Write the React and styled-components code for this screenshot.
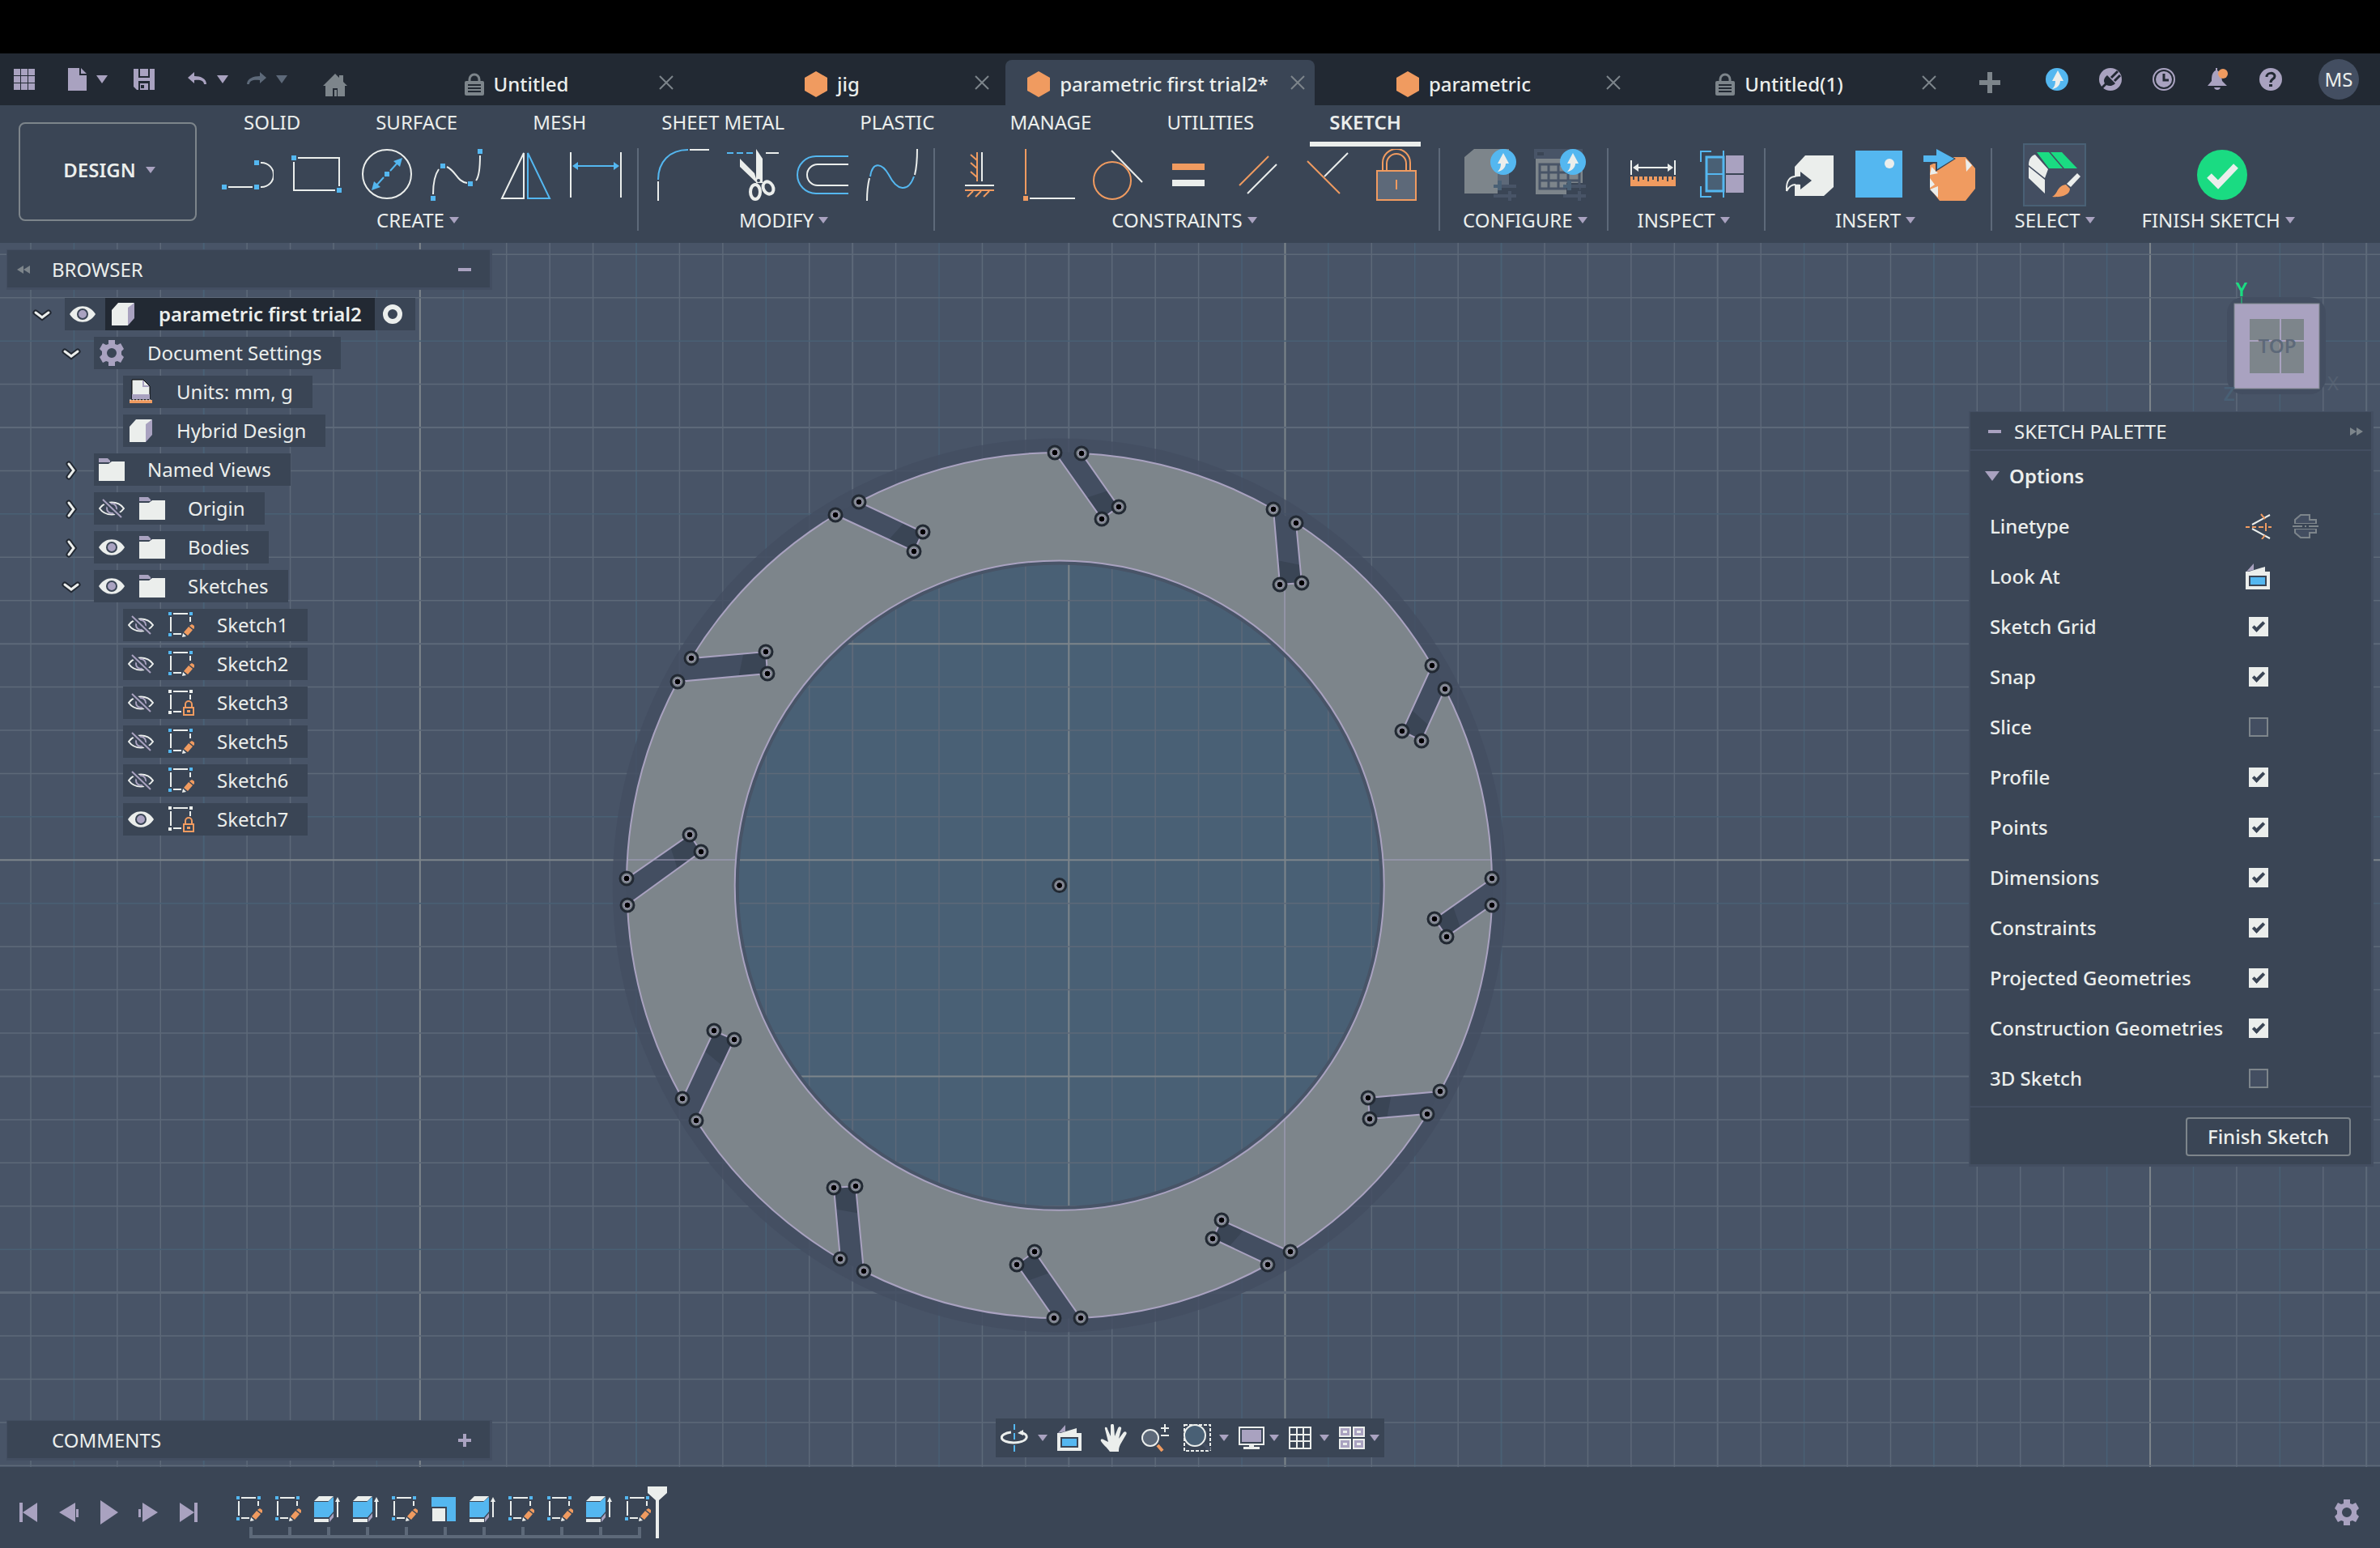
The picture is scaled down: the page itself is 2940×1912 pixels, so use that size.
import React, { useState } from 'react';
import styled, { createGlobalStyle, css } from 'styled-components';

const c = {
  black: '#000000',
  dark: '#222933',
  panel: '#3a4555',
  edge: '#434e61',
  canvas: '#485467',
  line: '#5d6979',
  deep: '#496075',
  grey: '#7d858b',
  text: '#ebeeec',
  lilac: '#a9a2c0',
  blue: '#54b7f0',
  orange: '#f09b60',
  green: '#1adb82',
};

const GlobalStyle = createGlobalStyle`
  *, *::before, *::after { box-sizing: border-box; }
  body {
    margin: 0;
    background: ${c.canvas};
    color: ${c.text};
    font-family: "Noto Sans", sans-serif;
    font-size: 24px;
    line-height: 32px;
  }
  button {
    margin: 0;
    padding: 0;
    border: 0;
    background: none;
    color: inherit;
    font: inherit;
    cursor: pointer;
  }
  svg { display: block; flex: none; }
  ul { margin: 0; padding: 0; list-style: none; }
`;

/* ---------- layout ---------- */

const Page = styled.div`
  display: flex;
  flex-direction: column;
  min-height: 100vh;
`;

const Notch = styled.div`
  height: 66px;
  background: ${c.black};
`;

const TitleBar = styled.header`
  display: flex;
  align-items: center;
  height: 64px;
  padding: 0 26px 0 17px;
  background: ${c.dark};
`;

const QuickTools = styled.div`
  display: flex;
  align-items: center;
  gap: 32px;
`;

const History = styled.div`
  display: flex;
  gap: 23px;
`;

const QuickButton = styled.button`
  display: flex;
  align-items: center;
  gap: 12px;
  min-width: ${p => p.$wide ? '35px' : '0'};
`;

const TabStrip = styled.nav`
  display: flex;
  align-self: flex-end;
  align-items: center;
  gap: 8px;
  height: 56px;
`;

const HomeButton = styled.button`
  padding: 6px 0 0;
  margin: 0 25px 0 44px;
`;

const Tab = styled.div`
  display: flex;
  align-items: center;
  flex: 0 1 382px;
  width: 382px;
  height: 56px;
  border-radius: 8px 8px 0 0;
  background: ${p => p.$active ? c.panel : 'transparent'};
`;

const TabTitle = styled.button`
  display: flex;
  flex: 1;
  align-items: center;
  justify-content: center;
  gap: 12px;
  padding: 4px 0 0 12px;
  font-weight: 500;
  white-space: nowrap;
`;

const TabClose = styled.button`
  display: grid;
  place-items: center;
  width: 42px;
  height: 42px;
`;

const AddTab = styled.button`
  margin-left: 33px;
`;

const Account = styled.div`
  display: flex;
  align-items: center;
  gap: 38px;
  margin-left: auto;
`;

const Avatar = styled.button`
  width: 50px;
  height: 50px;
  margin-left: 7px;
  border-radius: 50%;
  background: ${c.edge};
`;

const Ribbon = styled.section`
  display: flex;
  height: 170px;
  background: ${c.panel};
`;

const WorkspaceButton = styled.button`
  display: flex;
  align-items: center;
  justify-content: center;
  gap: 12px;
  width: 220px;
  height: 122px;
  margin: 21px 7px 0 23px;
  padding: 0 0 4px 4px;
  border: 2px solid ${c.grey};
  border-radius: 8px;
  font-weight: 600;
`;

const RibbonMain = styled.div`
  flex: 1;
`;

const RibbonTabs = styled.nav`
  display: flex;
  gap: 45px;
  height: 51px;
  margin-left: 27px;
`;

const RibbonTab = styled.button`
  height: 51px;
  padding: 0 24px 3px;
  border-bottom: 6px solid ${p => p.$active ? c.text : 'transparent'};
  font-weight: ${p => p.$active ? 600 : 400};
`;

const Groups = styled.div`
  display: flex;
  margin-top: 2px;
`;

const Group = styled.div`
  display: flex;
  flex-direction: column;
  align-items: center;
  gap: 10px;
  height: 102px;
  padding: 1px 19px 0 ${p => p.$last ? '32px' : '23px'};
  border-right: 2px solid ${p => p.$open ? 'transparent' : c.line};

  &:first-child { padding-left: 24px; }
`;

const GroupIcons = styled.div`
  display: flex;
  gap: 22px;
`;

const ToolButton = styled.button`
  ${p => p.$pressed && css`
    margin: -7px;
    padding: 5px;
    border: 2px solid ${c.deep};
    background: ${c.edge};
  `}
`;

const GroupLabel = styled.button`
  display: flex;
  align-items: center;
  gap: 6px;
  padding: ${p => p.$centered ? '0 5px' : '0 10px 0 0'};
  line-height: 28px;
  white-space: nowrap;
`;

const Workspace = styled.main`
  position: relative;
  display: grid;
  flex: 1;
  grid-template-columns: 1fr auto 1fr;
  padding: 8px;
`;

const Canvas = styled.svg`
  position: absolute;
  inset: 0;
  width: 100%;
  height: 100%;
`;

const LeftColumn = styled.div`
  position: relative;
  display: flex;
  flex-direction: column;
  justify-content: space-between;
  align-items: flex-start;
`;

const RightColumn = styled.div`
  position: relative;
  display: flex;
  flex-direction: column;
  align-items: flex-end;
`;

const PanelHeader = styled.div`
  display: flex;
  align-items: center;
  width: 600px;
  height: 50px;
  padding: 2px 23px 0 12px;
  border: solid ${c.edge};
  border-width: 1px 3px 3px 1px;
  background: ${c.panel};
`;

const PanelTitle = styled.h2`
  flex: 1;
  margin: 0;
  padding-left: ${p => p.$indent};
  font-size: 24px;
  font-weight: 400;
`;

/* ---------- browser tree ---------- */

const Tree = styled.ul`
  display: grid;
  gap: 8px;
  margin-top: 10px;
`;

const TreeRow = styled.li`
  display: flex;
  align-items: center;
  height: 40px;
  padding-left: ${p => 30 + p.$level * 36}px;
`;

const Toggle = styled.button`
  width: 42px;
  height: 40px;
  padding-top: 1px;
`;

const Node = styled.div`
  display: flex;
  height: 40px;
  background: ${c.panel};
`;

const EyeSlot = styled.button`
  display: grid;
  place-items: center;
  width: 50px;
  padding-right: 6px;
`;

const NodeBody = styled.div`
  display: flex;
  align-items: center;
  padding: 0 ${p => p.$root ? '16px' : '24px'} 0 6px;
  background: ${p => p.$root ? c.dark : 'transparent'};
  font-weight: ${p => p.$root ? 600 : 400};
  white-space: nowrap;
`;

const NodeIcon = styled.span`
  width: 60px;
`;

const RootRadio = styled.button`
  display: flex;
  align-items: center;
  width: 50px;
  padding-left: 10px;
`;

/* ---------- sketch palette ---------- */

const Palette = styled.aside`
  width: 500px;
  margin-top: 3px;
  border: solid ${c.edge};
  border-width: 1px 3px 3px 2px;
  background: ${c.panel};
`;

const PaletteHeader = styled.div`
  display: flex;
  align-items: center;
  height: 48px;
  padding: 2px 10px 0 22px;
  border-bottom: 2px solid ${c.edge};
`;

const OptionsTitle = styled.button`
  display: flex;
  align-items: center;
  gap: 12px;
  height: 62px;
  padding-left: 18px;
  font-weight: 600;
`;

const OptionRow = styled.div`
  display: grid;
  grid-template-columns: 1fr 151px;
  align-items: center;
  height: 62px;
  padding-left: 24px;
  font-weight: 500;
`;

const OptionIcons = styled.div`
  display: flex;
  gap: 26px;
  margin-left: -4px;
`;

const Check = styled.input`
  display: grid;
  place-content: center;
  appearance: none;
  width: 24px;
  height: 24px;
  margin: 0;
  border: 2px solid ${c.grey};
  background: ${c.edge};

  &:checked {
    border-color: ${c.text};
    background: ${c.text};
  }

  &:checked::after {
    content: "";
    width: 8px;
    height: 15px;
    border: solid ${c.panel};
    border-width: 0 4px 4px 0;
    transform: translateY(-2px) rotate(45deg);
  }
`;

const PaletteFooter = styled.div`
  display: flex;
  justify-content: flex-end;
  height: 72px;
  margin-top: 3px;
  padding: 12px 25px 0 0;
  border-top: 2px solid ${c.edge};
`;

const FinishButton = styled.button`
  width: 204px;
  height: 48px;
  border: 2px solid ${c.grey};
  border-radius: 4px;
  font-weight: 500;
`;

/* ---------- navigation bar ---------- */

const NavBar = styled.div`
  position: relative;
  display: flex;
  align-self: end;
  gap: 12px;
  height: 48px;
  margin-bottom: 4px;
  padding: 0 6px;
  background: ${c.panel};
`;

const NavButton = styled.button`
  display: flex;
  align-items: center;
  justify-content: space-between;
  width: ${p => p.$width}px;
  padding-bottom: 1px;
`;

/* ---------- timeline ---------- */

const Footer = styled.footer`
  display: flex;
  height: 100px;
  padding-right: 25px;
  background: ${c.panel};
`;

const Playback = styled.div`
  display: flex;
  align-items: center;
  gap: 23px;
  height: 32px;
  margin: 40px 48px 0 22px;
`;

const Timeline = styled.ul`
  display: flex;
  margin-top: 36px;
`;

const Feature = styled.li`
  width: 48px;

  &::after {
    content: "";
    display: block;
    width: 48px;
    height: 14px;
    margin: 6px 0 0 16px;
    border: solid ${c.line};
    border-width: 0 0 4px 4px;
  }

  &:last-child::after { width: 4px; }
`;

const Marker = styled.svg`
  margin: 24px 0 0 -20px;
`;

const Preferences = styled.button`
  height: 32px;
  margin: 40px 0 0 auto;
`;

/* ---------- icons ---------- */

const Icon = ({ w = 32, h, children }) => (
  <svg width={w} height={h || w} viewBox={`0 0 ${w} ${h || w}`} fill="none" strokeWidth="2" aria-hidden="true">
    {children}
  </svg>
);

const Caret = ({ w = 12, h = 8, fill = c.lilac }) => (
  <Icon w={w} h={h}><path d={`M0 0H${w}L${w / 2} ${h}Z`} fill={fill} /></Icon>
);

const Dots = ({ at, size = 6, fill = c.blue }) => (
  <g fill={fill}>
    {at.map(([x, y]) => <rect key={`${x}-${y}`} x={x - size / 2} y={y - size / 2} width={size} height={size} />)}
  </g>
);

const AppsIcon = () => (
  <Icon w={26}>
    {[0, 9, 18].map(y => [0, 9, 18].map(x => <rect key={x + '-' + y} x={x} y={y} width="8" height="8" fill={c.lilac} />))}
  </Icon>
);

const FileIcon = () => (
  <Icon w={23} h={28}><path d="M0 0H14V9H23V28H0Z M16 0L23 7H16Z" fill={c.lilac} /></Icon>
);

const SaveIcon = () => (
  <Icon w={26}>
    <path d="M0 0H6V11H20V0H26V26H4L0 22Z M8 0H18V9H8Z" fill={c.lilac} />
    <path d="M6 16H20M7 26V17H19V26" stroke={c.dark} />
    <rect x="9" y="20" width="4" height="4" fill={c.dark} />
  </Icon>
);

const UndoIcon = () => (
  <Icon w={24} h={18}>
    <path d="M0 7L8 0V5C16 5 23 8 23 15H20C20 10 14 9 8 10V14Z" fill={c.lilac} />
  </Icon>
);

const RedoIcon = () => (
  <Icon w={24} h={18}>
    <path d="M24 7L16 0V5C8 5 0 8 0 15H3C3 10 9 9 16 10V14Z" fill={c.line} />
  </Icon>
);

const HomeIcon = () => (
  <Icon w={30} h={28}>
    <path d="M0 15L15 0L20 5V2H25V10L30 15H27V28H18V18H12V28H3V15Z" fill={c.grey} />
    <rect x="14" y="20" width="3" height="8" fill={c.grey} />
  </Icon>
);

const TabLock = () => (
  <Icon w={24} h={28}>
    <path d="M6 11V8a6 6 0 0 1 12 0v3" stroke={c.grey} strokeWidth="3" />
    <rect y="10" width="24" height="18" rx="2" fill={c.grey} />
    <path d="M4 15H20M4 19H20M4 23H20" stroke={c.dark} />
  </Icon>
);

const Hexagon = () => (
  <Icon w={28} h={32}><path d="M14 0L28 8V24L14 32L0 24V8Z" fill={c.orange} /></Icon>
);

const CloseIcon = () => (
  <Icon w={18}><path d="M1 1L17 17M17 1L1 17" stroke={c.grey} /></Icon>
);

const PlusIcon = ({ w = 26, t = 6, fill = c.grey }) => (
  <Icon w={w}><path d={`M${w / 2} 0V${w}M0 ${w / 2}H${w}`} stroke={fill} strokeWidth={t} /></Icon>
);

const MinusIcon = () => <Icon w={16} h={4}><rect width="16" height="4" fill={c.lilac} /></Icon>;

const UpArrow = ({ x = 14, y = 14 }) => (
  <path
    transform={`translate(${x} ${y})`}
    d="M1 -11L8 2H4C4 7 0 11 -6 12C-3 9 -2 6 -2 2H-6Z"
    fill={c.text}
  />
);

const UpdateIcon = () => (
  <Icon w={28}><circle cx="14" cy="14" r="14" fill={c.blue} /><UpArrow /></Icon>
);

const PlugIcon = () => (
  <Icon w={28}>
    <circle cx="14" cy="14" r="14" fill={c.lilac} />
    <path d="M3 25L10 18M15 12L23 4M19 16L26 9" stroke={c.dark} strokeWidth="3" />
    <path d="M10 9L20 19C15 24 9 22 7 19C5 16 6 12 10 9Z" fill={c.dark} />
  </Icon>
);

const ClockIcon = () => (
  <Icon w={28}>
    <circle cx="14" cy="14" r="13" stroke={c.lilac} />
    <circle cx="14" cy="14" r="10" fill={c.lilac} />
    <path d="M14 7V15H20" stroke={c.dark} strokeWidth="3" />
  </Icon>
);

const BellIcon = () => (
  <Icon w={28}>
    <path d="M12 0H14V3C19 5 19 10 20 16L26 22H2L7 16C7 9 8 5 12 3Z" fill={c.lilac} />
    <path d="M10 24H18C17 28 11 28 10 24Z" fill={c.lilac} />
    <circle cx="21" cy="7" r="6" fill={c.orange} />
  </Icon>
);

const HelpIcon = () => (
  <Icon w={28}>
    <circle cx="14" cy="14" r="14" fill={c.lilac} />
    <path d="M9 11C9 5 19 5 19 10C19 14 14 13 14 18" stroke={c.dark} strokeWidth="3" />
    <rect x="12" y="20" width="4" height="3" fill={c.dark} />
  </Icon>
);

// ribbon tools, all on a 64px square

const LineTool = () => (
  <Icon w={64}>
    <path d="M8 47H38M48 17H49A15 15 0 0 1 49 47H48" stroke={c.text} />
    <Dots at={[[3, 47], [43, 17], [43, 47]]} />
  </Icon>
);

const RectTool = () => (
  <Icon w={64}>
    <path d="M8 11H59V46M54 51H3V16" stroke={c.text} />
    <Dots at={[[3, 11], [59, 51]]} />
  </Icon>
);

const CircleTool = () => (
  <Icon w={64}>
    <circle cx="32" cy="31" r="30" stroke={c.text} />
    <path d="M36 27L46 16M28 35L18 46" stroke={c.blue} />
    <path d="M51 11L48 22L40 15ZM13 51L16 40L24 47Z" fill={c.blue} />
    <Dots at={[[32, 31]]} />
  </Icon>
);

const SplineTool = () => (
  <Icon w={64}>
    <path d="M3 56C3 45 5 32 10 25M20 22C32 28 32 40 45 42M56 39C60 34 61 20 61 8" stroke={c.text} />
    <Dots at={[[3, 61], [15, 21], [49, 43], [61, 3]]} />
  </Icon>
);

const MirrorTool = () => (
  <Icon w={64}>
    <path d="M29 5V61H2Z" stroke={c.text} />
    <path d="M34 5V61H61Z" stroke={c.blue} />
  </Icon>
);

const DimensionTool = () => (
  <Icon w={64}>
    <path d="M1 4V60M63 4V60" stroke={c.text} />
    <path d="M8 21H56" stroke={c.blue} />
    <path d="M3 21L10 16V26ZM61 21L54 16V26Z" fill={c.blue} />
  </Icon>
);

const FilletTool = () => (
  <Icon w={64}>
    <path d="M1 64V40M40 1H64" stroke={c.text} />
    <path d="M1 38C1 16 15 1 38 1" stroke={c.blue} />
  </Icon>
);

const TrimTool = () => (
  <Icon w={64}>
    <path d="M0 5H34" stroke={c.blue} strokeDasharray="8 4" />
    <path d="M48 5H64" stroke={c.text} />
    <path d="M36 0L44 12V42H36ZM16 12L34 30L38 43L16 22Z" fill={c.text} />
    <ellipse cx="35" cy="53" rx="6" ry="9" stroke={c.text} strokeWidth="4" />
    <ellipse cx="51" cy="48" rx="6" ry="8" transform="rotate(-28 51 48)" stroke={c.text} strokeWidth="4" />
    <circle cx="39" cy="39" r="2" fill={c.panel} />
  </Icon>
);

const OffsetTool = () => (
  <Icon w={64}>
    <path d="M64 9H24A23 23 0 0 0 24 55H64" stroke={c.blue} />
    <path d="M64 19H26A13 13 0 0 0 26 45H64" stroke={c.text} />
  </Icon>
);

const CurvatureTool = () => (
  <Icon w={64}>
    <path d="M1 64C1 52 2 44 4 36M60 32C62 24 63 12 63 0" stroke={c.text} />
    <path d="M5 34C8 14 20 18 28 32C38 52 52 54 59 34" stroke={c.blue} />
  </Icon>
);

const HorizontalTool = () => (
  <Icon w={64}>
    <path d="M35 4V40M14 45H50" stroke={c.text} />
    <path d="M29 4V40M29 14L21 7M29 24L21 17M29 35L21 28M14 51H50M24 52L17 59M34 52L27 59M44 52L37 59" stroke={c.orange} />
  </Icon>
);

const CoincidentTool = () => (
  <Icon w={64}>
    <path d="M3 0V56" stroke={c.orange} />
    <path d="M8 61H64" stroke={c.text} />
    <Dots at={[[3, 61]]} fill={c.orange} />
  </Icon>
);

const TangentTool = () => (
  <Icon w={64}>
    <circle cx="24" cy="39" r="23" stroke={c.orange} />
    <path d="M23 2L61 41" stroke={c.text} />
  </Icon>
);

const EqualTool = () => (
  <Icon w={64}>
    <rect x="12" y="18" width="40" height="8" fill={c.orange} />
    <rect x="12" y="38" width="40" height="8" fill={c.text} />
  </Icon>
);

const ParallelTool = () => (
  <Icon w={64}>
    <path d="M9 45L45 9" stroke={c.orange} />
    <path d="M19 55L55 19" stroke={c.text} />
  </Icon>
);

const PerpendicularTool = () => (
  <Icon w={64}>
    <path d="M7 15L47 55" stroke={c.orange} />
    <path d="M57 5L28 34" stroke={c.text} />
  </Icon>
);

const FixTool = () => (
  <Icon w={64}>
    <path d="M14 26V17A17 17 0 0 1 48 17V26M19 26V18A12 12 0 0 1 43 18V26" stroke={c.orange} />
    <rect x="7" y="27" width="48" height="36" fill={c.line} stroke={c.orange} />
    <path d="M31 38V50" stroke={c.orange} />
  </Icon>
);

const FaintPlus = () => (
  <>
    <path d="M46 46H64M36 58H64M56 52V64" stroke={c.canvas} strokeWidth="4" />
    <path d="M36 44H41V39H46V51H41V48H36Z" fill={c.deep} />
  </>
);

const ConfigureTool = () => (
  <Icon w={64}>
    <path d="M0 10L12 0H55V43H41V55H0Z" fill={c.grey} />
    <path d="M41 14H55V44H41Z" fill={c.line} />
    <FaintPlus />
    <circle cx="48" cy="16" r="16" fill={c.blue} />
    <UpArrow x={47} y={16} />
  </Icon>
);

const ConfigTableTool = () => (
  <Icon w={64}>
    <path d="M0 0H60V12H0Z" fill={c.canvas} />
    <rect x="4" y="4" width="8" height="4" fill={c.panel} />
    <path d="M2 12H60V42H40V56H2Z" fill={c.grey} />
    <path d="M7 19H56V49H7ZM7 29H56M7 39H56M18 19V49M30 19V49M42 19V49" stroke={c.canvas} strokeWidth="3" />
    <path d="M40 44H56V56H40Z" fill={c.panel} />
    <FaintPlus />
    <circle cx="48" cy="16" r="16" fill={c.blue} />
    <UpArrow x={47} y={16} />
  </Icon>
);

const MeasureTool = () => (
  <Icon w={64}>
    <path d="M5 14V32M59 14V32M12 23H52" stroke={c.text} />
    <path d="M7 23L14 18V28ZM57 23L50 18V28Z" fill={c.text} />
    <rect x="4" y="34" width="56" height="12" fill={c.orange} />
    <path d="M8 34V38M14 34V40M20 34V38M26 34V40M32 34V38M38 34V40M44 34V38M50 34V40M56 34V38" stroke={c.panel} />
  </Icon>
);

const AnalysisTool = () => (
  <Icon w={64}>
    <rect x="12" y="10" width="21" height="42" fill={c.deep} stroke={c.blue} strokeWidth="3" />
    <path d="M18 3H5V16M18 59H5V46M33 2V60M12 31H33" stroke={c.blue} />
    <path d="M36 8H58V30H36ZM36 32H58V54H36Z" fill={c.lilac} />
  </Icon>
);

const InsertTool = () => (
  <Icon w={64}>
    <path d="M26 8H61V47L49 58H13V22Z" fill={c.text} />
    <path d="M3 52C2 38 8 34 20 34V28L34 39L20 50V44C12 43 7 45 3 52Z" fill={c.panel} />
    <path d="M3 52C2 38 8 34 14 34M3 52C6 46 9 44 14 44" stroke={c.text} />
  </Icon>
);

const DecalTool = () => (
  <Icon w={64}>
    <rect x="2" y="2" width="58" height="58" fill={c.blue} />
    <circle cx="44" cy="18" r="6" fill={c.text} />
  </Icon>
);

const MeshTool = () => (
  <Icon w={64}>
    <path d="M30 10H52L64 24V49L52 64H20L8 49V20Z" fill={c.orange} />
    <path d="M52 12L60 20L53 28ZM10 22L18 30L8 32ZM8 36L14 44L8 48ZM8 50L18 46V60Z" fill={c.text} />
    <path d="M0 7H15V-2L40 12L15 28V18H0Z" fill={c.panel} />
    <path d="M0 8H16V0L38 12L17 25V16H0Z" fill={c.blue} />
  </Icon>
);

const SelectTool = () => (
  <Icon w={64}>
    <path d="M10 4H25L42 24H25ZM27 4H41L60 24H44Z" fill={c.green} />
    <path d="M8 7L24 25L20 36L0 20C0 13 3 8 8 7ZM0 22L20 38V55L0 36Z" fill={c.text} />
    <path d="M60 30L64 34L52 47L47 43Z" fill={c.text} />
    <path d="M46 44L51 49C51 57 40 60 29 59C36 56 35 45 46 44Z" fill={c.orange} />
  </Icon>
);

const FinishTool = () => (
  <Icon w={64}>
    <circle cx="32" cy="32" r="31" fill={c.green} />
    <path d="M16 33L27 44L49 21" stroke={c.text} strokeWidth="8" />
  </Icon>
);

// browser tree

const Chevron = ({ open }) => (
  <Icon w={28}>
    {[c.dark, c.text].map((stroke, i) => (
      <path key={stroke} d={open ? 'M6 11L14 17L22 11' : 'M11 6L17 14L11 22'} stroke={stroke} strokeWidth={i ? 3 : 7} strokeLinecap="round" />
    ))}
  </Icon>
);

const EyeIcon = ({ off }) => off ? (
  <Icon w={32} h={24}>
    <path d="M1 12C8 2 24 2 31 12C24 22 8 22 1 12Z" stroke={c.text} />
    <path d="M10 12A6 6 0 0 1 22 12A6 6 0 0 1 10 12Z" stroke={c.lilac} />
    <path d="M5 1L28 23" stroke={c.panel} strokeWidth="6" />
    <path d="M5 1L28 23" stroke={c.lilac} />
  </Icon>
) : (
  <Icon w={32} h={24}>
    <path d="M0 12C8 -1 24 -1 32 12C24 25 8 25 0 12Z" fill={c.text} />
    <circle cx="16" cy="12" r="6" fill={c.lilac} stroke={c.panel} />
  </Icon>
);

const CubeIcon = () => (
  <Icon w={32} h={28}>
    <path d="M2 9L10 0H30L22 9V28H2Z" fill={c.text} />
    <path d="M22 6L30 0V19L22 28Z" fill={c.lilac} />
  </Icon>
);

const GearIcon = () => (
  <Icon w={32}>
    <path fillRule="evenodd" d="M12 0H20V5L23 6L27 4L31 11L28 14V18L31 21L27 28L23 26L20 27V32H12V27L9 26L5 28L1 21L4 18V14L1 11L5 4L9 6L12 5ZM16 10A6 6 0 1 0 16 22A6 6 0 1 0 16 10Z" fill={c.lilac} />
  </Icon>
);

const UnitsIcon = () => (
  <Icon w={32}>
    <path d="M5 1H19L27 9V25H5Z" fill={c.text} stroke="#000" strokeWidth="1" />
    <path d="M5 19H27V25H5Z" fill={c.lilac} />
    <path d="M19 2V9H26" stroke={c.lilac} />
    <path d="M2 26H30V30H2Z" fill={c.orange} />
    <path d="M2 26H30" stroke={c.text} strokeWidth="1" strokeDasharray="2 2" />
  </Icon>
);

const FolderIcon = () => (
  <Icon w={32} h={28}>
    <path d="M0 0H11L14 3V5H0Z" fill={c.lilac} />
    <path d="M0 7H12L16 4H32V28H0Z" fill={c.text} />
  </Icon>
);

const SketchIcon = ({ locked }) => (
  <Icon w={32}>
    <path d="M6 2H24M3 6V24M6 27H16M27 6V12" stroke={c.text} />
    <Dots at={[[2, 2], [28, 2], [2, 28]]} size={4} fill={locked ? c.text : c.blue} />
    {locked ? (
      <>
        <rect x="19" y="22" width="12" height="9" stroke={c.orange} />
        <path d="M21 21V18A4 4 0 0 1 29 18V21" stroke={c.orange} />
        <rect x="23" y="25" width="4" height="3" fill={c.orange} />
      </>
    ) : (
      <>
        <path d="M17 31L18 26L22 30Z" fill={c.text} />
        <path d="M19 25L25 18L30 22L24 29Z" fill={c.orange} />
        <path d="M26 17L29 15L32 17V20L31 21Z" fill={c.orange} />
      </>
    )}
  </Icon>
);

const CollapseArrows = ({ right }) => (
  <Icon w={16} h={12}>
    <path d={right ? 'M0 1L8 6L0 11ZM8 1L16 6L8 11Z' : 'M16 1L8 6L16 11ZM8 1L0 6L8 11Z'} fill={c.grey} />
  </Icon>
);

const LookAtIcon = ({ w = 30 }) => (
  <Icon w={w} h={32}>
    <path d="M1 10L10 0V8Z" fill={c.lilac} />
    <path d={`M4 10L${w - 6} 4V10H${w}V32H0V10Z`} fill={c.text} />
    <rect x="5" y="16" width={w - 10} height="11" fill={c.blue} stroke={c.panel} />
  </Icon>
);

const ConstructionIcon = () => (
  <Icon w={32}>
    <path d="M8 14L30 2M8 19L30 31" stroke={c.text} />
    <path d="M0 17H5M8 17H13M16 17H22M28 17H32M25 12V22M19 1L24 7M20 32L24 27" stroke={c.orange} />
  </Icon>
);

const CenterlineIcon = () => (
  <Icon w={32}>
    <path d="M3 13V8L10 2H21V8H29V13ZM3 19V24L10 30H21V24H29V19Z" fill={c.edge} stroke={c.grey} />
    <path d="M0 16H32" stroke={c.panel} strokeWidth="6" />
    <path d="M0 16H12M15 16H17M20 16H32" stroke={c.grey} />
  </Icon>
);

// navigation bar

const OrbitIcon = () => (
  <Icon w={34}>
    <path d="M13 10C-3 12 -3 22 16 23C36 22 36 12 24 10" stroke={c.text} strokeWidth="3" />
    <path d="M21 11L28 7V14Z" fill={c.text} />
    <path d="M17 0V7M17 11V19M17 26V34" stroke={c.blue} />
  </Icon>
);

const HandIcon = () => (
  <Icon w={34}>
    <path d="M13 34C9 28 5 26 2 21C1 19 3 18 5 19L11 22L7 6C6 3 10 3 10 6L14 15V2C14 -1 18 -1 18 2L19 15L23 5C24 2 28 3 27 6L24 18L30 10C32 8 35 10 33 13L26 25C24 29 24 31 24 34Z" fill={c.text} />
  </Icon>
);

const ZoomIcon = () => (
  <Icon w={34}>
    <circle cx="11" cy="17" r="10" fill={c.line} stroke={c.text} />
    <path d="M20 26L26 33" stroke={c.orange} strokeWidth="4" />
    <path d="M29 0V10M24 5H34M24 14H34" stroke={c.text} />
  </Icon>
);

const FitIcon = () => (
  <Icon w={34}>
    <rect x="1" y="1" width="32" height="32" stroke={c.text} strokeDasharray="4 2" />
    <circle cx="14" cy="14" r="13" fill={c.deep} stroke={c.text} />
    <path d="M24 24L33 32" stroke={c.edge} strokeWidth="4" />
  </Icon>
);

const DisplayIcon = () => (
  <Icon w={32} h={28}>
    <rect x="1" y="1" width="30" height="21" stroke={c.text} />
    <rect x="4" y="4" width="24" height="15" fill={c.lilac} />
    <path d="M13 22H19V25H26V28H6V25H13Z" fill={c.text} />
  </Icon>
);

const GridIcon = () => (
  <Icon w={28}>
    <path d="M1 1H27V27H1ZM10 1V27M18 1V27M1 10H27M1 18H27" stroke={c.text} />
  </Icon>
);

const ViewportsIcon = () => (
  <Icon w={32} h={28}>
    {[[1, 1], [18, 1], [1, 16], [18, 16]].map(([x, y]) => (
      <g key={`${x}-${y}`}>
        <rect x={x} y={y} width="13" height="11" fill={c.lilac} stroke={c.text} />
        <rect x={x + 4} y={y + 4} width="5" height="3" fill={c.text} />
      </g>
    ))}
  </Icon>
);

// timeline

const ExtrudeIcon = () => (
  <Icon w={32}>
    <path d="M0 6L6 0H24L18 6Z" fill={c.text} />
    <path d="M0 7H17L24 1V19L18 26H0Z" fill={c.blue} />
    <path d="M0 28H18V32H0Z" fill={c.text} />
    <path d="M19 27L24 21V26L19 32Z" fill={c.lilac} />
    <path d="M29 6V26" stroke={c.text} />
    <path d="M26 7L29 1L32 7Z" fill={c.text} />
  </Icon>
);

const ScaleIcon = () => (
  <Icon w={32}>
    <rect x="1" y="1" width="30" height="30" fill={c.blue} />
    <rect x="1" y="14" width="18" height="18" fill={c.text} stroke={c.panel} />
  </Icon>
);

const playback = [
  ['Go to start', 'M2 4H6V28H2ZM6 16L24 4V28Z'],
  ['Step back', 'M2 16L22 4V28ZM23 12H28V22H23Z'],
  ['Play', 'M4 1L26 16L4 31Z'],
  ['Step forward', 'M26 16L7 4V28ZM2 12H5V22H2Z'],
  ['Go to end', 'M22 4H26V28H22ZM22 16L4 4V28Z'],
];

/* ---------- data ---------- */

const documents = [
  { name: 'Untitled', icon: TabLock },
  { name: 'jig', icon: Hexagon },
  { name: 'parametric first trial2*', icon: Hexagon, active: true },
  { name: 'parametric', icon: Hexagon },
  { name: 'Untitled(1)', icon: TabLock },
];

const ribbonTabs = ['SOLID', 'SURFACE', 'MESH', 'SHEET METAL', 'PLASTIC', 'MANAGE', 'UTILITIES', 'SKETCH'];

const groups = [
  { label: 'CREATE', tools: [LineTool, RectTool, CircleTool, SplineTool, MirrorTool, DimensionTool] },
  { label: 'MODIFY', tools: [FilletTool, TrimTool, OffsetTool, CurvatureTool] },
  { label: 'CONSTRAINTS', tools: [HorizontalTool, CoincidentTool, TangentTool, EqualTool, ParallelTool, PerpendicularTool, FixTool] },
  { label: 'CONFIGURE', tools: [ConfigureTool, ConfigTableTool], centered: true },
  { label: 'INSPECT', tools: [MeasureTool, AnalysisTool] },
  { label: 'INSERT', tools: [InsertTool, DecalTool, MeshTool] },
  { label: 'SELECT', tools: [SelectTool], open: true, pressed: true, centered: true },
  { label: 'FINISH SKETCH', tools: [FinishTool], open: true, last: true },
];

const tree = [
  { name: 'parametric first trial2', level: 0, icon: CubeIcon, expand: 'open', eye: 'on', root: true },
  { name: 'Document Settings', level: 1, icon: GearIcon, expand: 'open' },
  { name: 'Units: mm, g', level: 2, icon: UnitsIcon },
  { name: 'Hybrid Design', level: 2, icon: CubeIcon },
  { name: 'Named Views', level: 1, icon: FolderIcon, expand: 'closed' },
  { name: 'Origin', level: 1, icon: FolderIcon, expand: 'closed', eye: 'off' },
  { name: 'Bodies', level: 1, icon: FolderIcon, expand: 'closed', eye: 'on' },
  { name: 'Sketches', level: 1, icon: FolderIcon, expand: 'open', eye: 'on' },
  { name: 'Sketch1', level: 2, icon: SketchIcon, eye: 'off' },
  { name: 'Sketch2', level: 2, icon: SketchIcon, eye: 'off' },
  { name: 'Sketch3', level: 2, icon: SketchIcon, eye: 'off', locked: true },
  { name: 'Sketch5', level: 2, icon: SketchIcon, eye: 'off' },
  { name: 'Sketch6', level: 2, icon: SketchIcon, eye: 'off' },
  { name: 'Sketch7', level: 2, icon: SketchIcon, eye: 'on', locked: true },
];

const initialOptions = {
  'Sketch Grid': true,
  'Snap': true,
  'Slice': false,
  'Profile': true,
  'Points': true,
  'Dimensions': true,
  'Constraints': true,
  'Projected Geometries': true,
  'Construction Geometries': true,
  '3D Sketch': false,
};

const navTools = [
  { name: 'Orbit', icon: OrbitIcon, width: 58, menu: true },
  { name: 'Look at', icon: LookAtIcon, width: 40 },
  { name: 'Pan', icon: HandIcon, width: 40 },
  { name: 'Zoom', icon: ZoomIcon, width: 40 },
  { name: 'Fit', icon: FitIcon, width: 56, menu: true },
  { name: 'Display settings', icon: DisplayIcon, width: 50, menu: true },
  { name: 'Grid and snaps', icon: GridIcon, width: 50, menu: true },
  { name: 'Viewports', icon: ViewportsIcon, width: 50, menu: true },
];

const features = ['sketch', 'sketch', 'extrude', 'extrude', 'sketch', 'scale', 'extrude', 'sketch', 'sketch', 'extrude', 'sketch'];
const featureIcons = { sketch: SketchIcon, extrude: ExtrudeIcon, scale: ScaleIcon };

/* ---------- sketch canvas ---------- */

const center = [1308.7, 1093.6];
const origin = [1320.3, 1062.3];
const step = 53.43;

const softColumns = [-23, -20, -16, -14, -10, -7, -3, 4, 6, 8, 10, 17, 20, 24, 26, 28];
const brightColumns = [-15, 5, 25];
const softRows = [-12, -8, -1, 1, 9];
const brightRows = [0];

// four points for each slot of the rotor, clockwise from the top
const slots = [
  [[1303, 559], [1361, 641], [1382, 626], [1336, 560]],
  [[1573, 629], [1581, 722], [1608, 720], [1601, 646]],
  [[1769, 822], [1732, 903], [1756, 915], [1785, 851]],
  [[1843, 1085], [1772, 1135], [1787, 1157], [1843, 1118]],
  [[1779, 1348], [1690, 1356], [1692, 1382], [1763, 1376]],
  [[1594, 1546], [1509, 1507], [1498, 1530], [1566, 1562]],
  [[1335, 1628], [1278, 1546], [1256, 1562], [1302, 1628]],
  [[1067, 1570], [1057, 1465], [1030, 1467], [1038, 1555]],
  [[860, 1384], [907, 1284], [882, 1273], [843, 1357]],
  [[775, 1118], [866, 1052], [852, 1031], [774, 1085]],
  [[837, 842], [948, 832], [946, 805], [854, 813]],
  [[1032, 636], [1129, 681], [1140, 657], [1061, 620]],
];

const outline = slots.map(([a, b, d, e], i) => (
  `${i ? 'A535 535 0 0 1' : 'M'} ${a} L${b} L${d} L${e}`
)).join(' ') + ` A535 535 0 0 1 ${slots[0][0]}Z`;

const hole = `M${center[0] - 401} ${center[1]}a401 401 0 1 0 802 0a401 401 0 1 0 -802 0Z`;

const range = (from, to) => Array.from({ length: to - from + 1 }, (_, i) => from + i);
const mix = (a, b, t) => [a[0] + (b[0] - a[0]) * t, a[1] + (b[1] - a[1]) * t];

const GridLines = ({ inside }) => {
  const tone = (i, soft, bright) => {
    if (bright.includes(i)) return c.grey;
    return soft.includes(i) && !inside ? c.deep : c.line;
  };
  return (
    <g strokeWidth="2">
      {range(-24, 30).map(i => (
        <path
          key={`x${i}`}
          d={`M${origin[0] + i * step} 300V1812`}
          stroke={tone(i, softColumns, inside ? [0, 5] : brightColumns)}
          strokeWidth={i % 5 ? 1.5 : 2}
        />
      ))}
      {range(-14, 14).map(i => (
        <path
          key={`y${i}`}
          d={`M0 ${origin[1] + i * step}H2940`}
          stroke={tone(i, softRows, inside ? [-5, 0, 5] : brightRows)}
          strokeWidth={i % 5 ? 1.5 : (i === 10 ? 3 : 2)}
        />
      ))}
    </g>
  );
};

const Point = ({ at }) => (
  <g>
    <circle cx={at[0]} cy={at[1]} r="8" fill={c.grey} stroke={c.dark} strokeWidth="3" />
    <circle cx={at[0]} cy={at[1]} r="4" fill="#000" stroke={c.lilac} strokeWidth="1" />
  </g>
);

const SketchCanvas = () => (
  <Canvas viewBox="0 300 2940 1512" preserveAspectRatio="xMidYMid slice" role="img" aria-label="Sketch7">
    <defs>
      <clipPath id="hole"><path d={hole} /></clipPath>
    </defs>
    <rect x="0" y="300" width="2940" height="1512" fill={c.canvas} />
    <GridLines />
    <circle cx={center[0]} cy={center[1]} r="538" fill="none" stroke={c.edge} strokeWidth="28" opacity="0.8" />
    <circle cx={center[0]} cy={center[1]} r="535" fill={c.edge} />
    {slots.map(([a, b, d, e]) => (
      <path key={String(a)} d={`M${mix(b, a, 0.32)} L${b} L${d} L${mix(d, e, 0.3)}Z`} fill={c.panel} />
    ))}
    <path d={hole} fill={c.deep} />
    <g clipPath="url(#hole)">
      <GridLines inside />
      <path d={hole} fill="none" stroke={c.canvas} strokeWidth="10" />
    </g>
    <path d={outline + hole} fill={c.grey} fillRule="evenodd" stroke={c.lilac} strokeWidth="2" />
    <path d="M775 1062H908M1709 1062H1842M1587 722V805M1587 1382V1548" stroke={c.lilac} strokeWidth="1" />
    {slots.flat().map(p => <Point key={String(p)} at={p} />)}
    <Point at={center} />
  </Canvas>
);

const CubeSvg = styled.svg`
  margin: 29px 38px 0 0;
`;

const ViewCube = () => (
  <CubeSvg width="150" height="168" viewBox="0 -8 150 168" fontSize="24" fontWeight="600" role="img" aria-label="View cube">
    <rect x="7" y="22" width="122" height="120" rx="20" fill={c.edge} />
    <path d="M25 22V30" stroke={c.green} />
    <rect x="16" y="30" width="105" height="105" fill={c.lilac} stroke={c.grey} />
    <rect x="35" y="49" width="67" height="67" fill={c.grey} />
    <path d="M73 49V116M35 76H102" stroke={c.lilac} strokeWidth="2" />
    <text x="69" y="91" textAnchor="middle" fill={c.line}>TOP</text>
    <text x="25" y="21" textAnchor="middle" fill={c.green}>Y</text>
    <text x="10" y="150" textAnchor="middle" fill={c.deep}>Z</text>
    <text x="138" y="137" textAnchor="middle" fontWeight="400" fill={c.line} opacity="0.6">X</text>
  </CubeSvg>
);

/* ---------- sections ---------- */

const TopBar = () => (
  <TitleBar>
    <QuickTools>
      <QuickButton $wide aria-label="Data panel"><AppsIcon /></QuickButton>
      <QuickButton aria-label="File"><FileIcon /><Caret w={14} h={10} /></QuickButton>
      <QuickButton $wide aria-label="Save"><SaveIcon /></QuickButton>
      <History>
        <QuickButton aria-label="Undo"><UndoIcon /><Caret w={14} h={10} /></QuickButton>
        <QuickButton aria-label="Redo"><RedoIcon /><Caret w={14} h={10} fill={c.line} /></QuickButton>
      </History>
    </QuickTools>
    <TabStrip>
      <HomeButton aria-label="Home"><HomeIcon /></HomeButton>
      {documents.map(doc => (
        <Tab key={doc.name} $active={doc.active}>
          <TabTitle><doc.icon />{doc.name}</TabTitle>
          <TabClose aria-label={`Close ${doc.name}`}><CloseIcon /></TabClose>
        </Tab>
      ))}
      <AddTab aria-label="New tab"><PlusIcon /></AddTab>
    </TabStrip>
    <Account>
      <UpdateIcon />
      <PlugIcon />
      <ClockIcon />
      <BellIcon />
      <HelpIcon />
      <Avatar>MS</Avatar>
    </Account>
  </TitleBar>
);

const Toolbar = () => {
  const [active, setActive] = useState('SKETCH');

  return (
    <Ribbon>
      <WorkspaceButton>DESIGN <Caret /></WorkspaceButton>
      <RibbonMain>
        <RibbonTabs>
          {ribbonTabs.map(tab => (
            <RibbonTab key={tab} $active={tab === active} onClick={() => setActive(tab)}>{tab}</RibbonTab>
          ))}
        </RibbonTabs>
        <Groups>
          {groups.map(({ label, tools, open, last, pressed, centered }) => (
            <Group key={label} $open={open} $last={last}>
              <GroupIcons>
                {tools.map((Tool, i) => (
                  <ToolButton key={i} $pressed={pressed} aria-label={`${label} ${i + 1}`}><Tool /></ToolButton>
                ))}
              </GroupIcons>
              <GroupLabel $centered={centered}>{label}<Caret /></GroupLabel>
            </Group>
          ))}
        </Groups>
      </RibbonMain>
    </Ribbon>
  );
};

const Browser = () => (
  <section>
    <PanelHeader>
      <CollapseArrows />
      <PanelTitle $indent="27px">BROWSER</PanelTitle>
      <button aria-label="Minimize"><MinusIcon /></button>
    </PanelHeader>
    <Tree>
      {tree.map(node => (
        <TreeRow key={node.name} $level={node.level}>
          <Toggle as={node.expand ? 'button' : 'span'} aria-label={node.expand && 'Toggle'}>
            {node.expand && <Chevron open={node.expand === 'open'} />}
          </Toggle>
          <Node>
            {node.eye && (
              <EyeSlot aria-label={`Show ${node.name}`}><EyeIcon off={node.eye === 'off'} /></EyeSlot>
            )}
            <NodeBody $root={node.root}>
              <NodeIcon><node.icon {...(node.locked && { locked: true })} /></NodeIcon>
              {node.name}
            </NodeBody>
            {node.root && (
              <RootRadio aria-label="Activate component">
                <Icon w={24}><circle cx="12" cy="12" r="9" stroke={c.text} strokeWidth="6" /></Icon>
              </RootRadio>
            )}
          </Node>
        </TreeRow>
      ))}
    </Tree>
  </section>
);

const SketchPalette = () => {
  const [options, setOptions] = useState(initialOptions);

  const toggle = name => setOptions({ ...options, [name]: !options[name] });

  return (
    <Palette>
      <PaletteHeader>
        <MinusIcon />
        <PanelTitle $indent="16px">SKETCH PALETTE</PanelTitle>
        <CollapseArrows right />
      </PaletteHeader>
      <OptionsTitle><Caret w={18} h={12} />Options</OptionsTitle>
      <OptionRow>
        <span>Linetype</span>
        <OptionIcons>
          <button aria-label="Construction"><ConstructionIcon /></button>
          <button aria-label="Centerline"><CenterlineIcon /></button>
        </OptionIcons>
      </OptionRow>
      <OptionRow>
        <span>Look At</span>
        <OptionIcons><button aria-label="Look At"><LookAtIcon /></button></OptionIcons>
      </OptionRow>
      {Object.keys(options).map(name => {
        const id = name.toLowerCase().replace(/ /g, '-');
        return (
          <OptionRow key={name}>
            <label htmlFor={id}>{name}</label>
            <Check id={id} type="checkbox" checked={options[name]} onChange={() => toggle(name)} />
          </OptionRow>
        );
      })}
      <PaletteFooter>
        <FinishButton>Finish Sketch</FinishButton>
      </PaletteFooter>
    </Palette>
  );
};

const App = () => (
  <>
    <GlobalStyle />
    <Page>
      <Notch />
      <TopBar />
      <Toolbar />
      <Workspace>
        <SketchCanvas />
        <LeftColumn>
          <Browser />
          <PanelHeader>
            <PanelTitle $indent="43px">COMMENTS</PanelTitle>
            <button aria-label="Add comment"><PlusIcon w={16} t={4} fill={c.lilac} /></button>
          </PanelHeader>
        </LeftColumn>
        <NavBar>
          {navTools.map(tool => (
            <NavButton key={tool.name} $width={tool.width} aria-label={tool.name}>
              <tool.icon />
              {tool.menu && <Caret />}
            </NavButton>
          ))}
        </NavBar>
        <RightColumn>
          <ViewCube />
          <SketchPalette />
        </RightColumn>
      </Workspace>
      <Footer>
        <Playback>
          {playback.map(([name, d]) => (
            <button key={name} aria-label={name}>
              <Icon w={26} h={32}><path d={d} fill={c.lilac} /></Icon>
            </button>
          ))}
        </Playback>
        <Timeline>
          {features.map((kind, i) => {
            const FeatureIcon = featureIcons[kind];
            return <Feature key={i}><FeatureIcon /></Feature>;
          })}
        </Timeline>
        <Marker width="24" height="64" viewBox="0 0 24 64">
          <path d="M0 0H24V8L14 17V64H10V17L0 8Z" fill={c.text} />
        </Marker>
        <Preferences aria-label="Preferences"><GearIcon /></Preferences>
      </Footer>
    </Page>
  </>
);

export default App;
